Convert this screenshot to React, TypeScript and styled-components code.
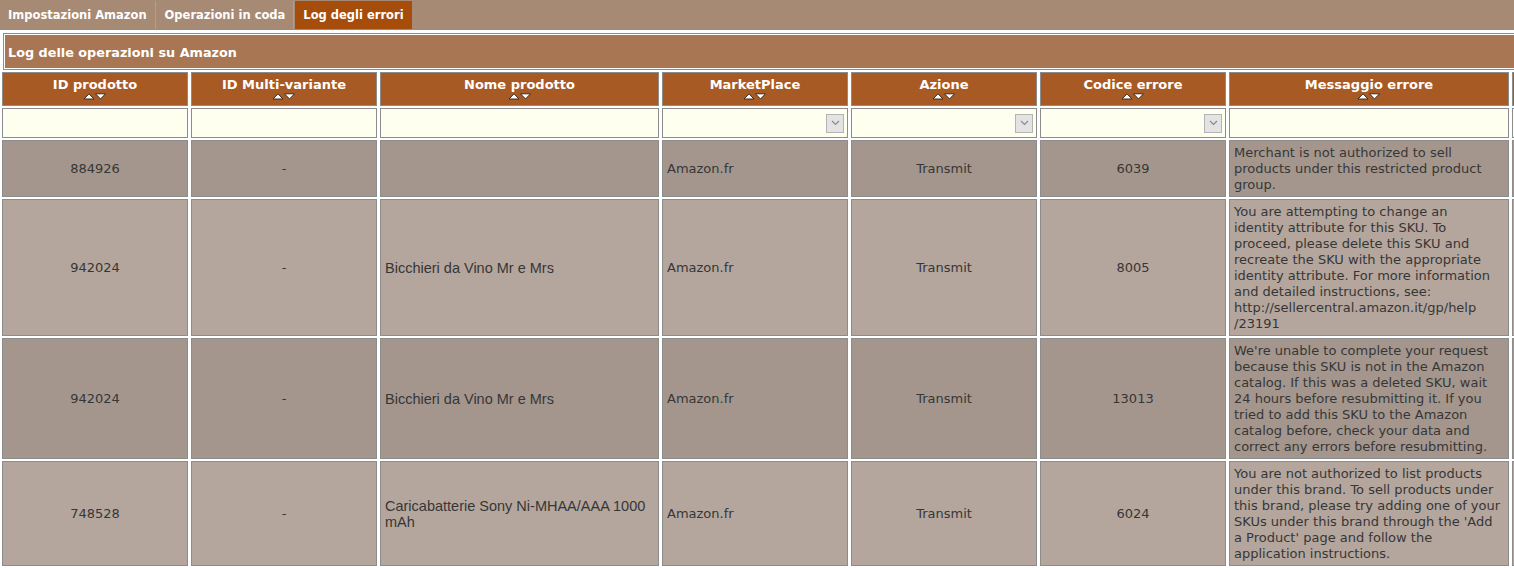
import styled, { createGlobalStyle } from "styled-components";

const GlobalStyle = createGlobalStyle`
  html, body {
    margin: 0;
    padding: 0;
    background: #ffffff;
    overflow: hidden;
  }
  body {
    font-family: "DejaVu Sans", Verdana, sans-serif;
  }
`;

const Page = styled.div`
  width: 1514px;
  height: 568px;
  overflow: hidden;
`;

const TabBar = styled.div`
  display: flex;
  align-items: stretch;
  height: 30px;
  padding-top: 1px;
  box-sizing: border-box;
  background: #a68a74;
`;

const Tab = styled.div<{ $active?: boolean }>`
  display: flex;
  align-items: center;
  height: 28px;
  padding: 0 8px 1px;
  box-sizing: border-box;
  font-size: 11.5px;
  font-weight: bold;
  color: #ffffff;
  background: ${(p) => (p.$active ? "#a64d0c" : "transparent")};
  border-right: ${(p) => (p.$active ? "none" : "1px solid #b79d8a")};
  margin-right: ${(p) => (p.$active ? "0" : "1px")};
`;

const TitleBar = styled.div`
  margin: 3px 0 0 3px;
  height: 37px;
  box-sizing: border-box;
  border: 1px solid #8c8c8c;
  border-right: none;
  box-shadow: inset 1px 1px 0 #ffffff, inset 0 -1px 0 #ffffff;
  background: #a87652;
  display: flex;
  align-items: center;
  padding: 1px 0 0 4px;
  font-size: 12.8px;
  font-weight: bold;
  color: #ffffff;
`;

const Grid = styled.table`
  border-collapse: separate;
  border-spacing: 3px 2px;
  table-layout: fixed;
  margin: 0 0 0 -1px;
  width: 1701px;
`;

const HeadCell = styled.th<{ $w: number }>`
  width: ${(p) => p.$w}px;
  box-sizing: border-box;
  background: #a85a25;
  border: 1px solid #8c8c8c;
  padding: 4px 2px 4px;
  color: #ffffff;
  font-size: 13px;
  font-weight: bold;
  text-align: center;
  vertical-align: top;
`;

const HeadLabel = styled.div`
  line-height: 15px;
  white-space: nowrap;
`;

const SortArrows = styled.div`
  display: flex;
  justify-content: center;
  height: 9px;
  padding-top: 1px;
  box-sizing: border-box;
`;

const FilterCell = styled.td`
  height: 30px;
  box-sizing: border-box;
  background: #fffff0;
  border: 1px solid #8c8c8c;
  padding: 0 3px 0 0;
`;

const SelectBox = styled.div`
  display: flex;
  justify-content: flex-end;
  align-items: center;
`;

const DropButton = styled.div`
  display: flex;
  align-items: center;
  justify-content: center;
  width: 18px;
  height: 19px;
  box-sizing: border-box;
  background: #e3e3e3;
  border: 1px solid #b4b4b4;
`;

const Cell = styled.td<{ $odd: boolean; $align: string; $product?: boolean }>`
  box-sizing: border-box;
  background: ${(p) => (p.$odd ? "#a4968d" : "#b4a69d")};
  border: 1px solid #8c8c8c;
  padding: 4px 4px 3px 4px;
  color: #363636;
  font-size: ${(p) => (p.$product ? "14.5px" : "13px")};
  line-height: 16px;
  text-align: ${(p) => p.$align};
  vertical-align: middle;
  white-space: pre-line;
  font-family: ${(p) =>
    p.$product ? '"Liberation Sans", Arial, sans-serif' : "inherit"};
`;

const Arrows = () => (
  <svg width="24" height="7" viewBox="0 0 24 7">
    <polygon points="1,6 6,0.8 11,6" fill="#ffffff" stroke="#3a2a20" strokeWidth="1" />
    <polygon points="12.5,0.8 22.5,0.8 17.5,6" fill="#ffffff" stroke="#3a2a20" strokeWidth="1" />
  </svg>
);

const Chevron = () => (
  <svg width="9" height="6" viewBox="0 0 9 6">
    <polyline points="1,1 4.5,4.5 8,1" fill="none" stroke="#8a8a8a" strokeWidth="1.2" />
  </svg>
);

type Column = { label: string; width: number; align: string; select?: boolean; product?: boolean };

const columns: Column[] = [
  { label: "ID prodotto", width: 186, align: "center" },
  { label: "ID Multi-variante", width: 186, align: "center" },
  { label: "Nome prodotto", width: 279, align: "left", product: true },
  { label: "MarketPlace", width: 186, align: "left", select: true },
  { label: "Azione", width: 186, align: "center", select: true },
  { label: "Codice errore", width: 186, align: "center", select: true },
  { label: "Messaggio errore", width: 280, align: "left" },
  { label: "", width: 186, align: "center" },
];

const rows: string[][] = [
  [
    "884926",
    "-",
    "",
    "Amazon.fr",
    "Transmit",
    "6039",
    "Merchant is not authorized to sell products under this restricted product group.",
    "",
  ],
  [
    "942024",
    "-",
    "Bicchieri da Vino Mr e Mrs",
    "Amazon.fr",
    "Transmit",
    "8005",
    "You are attempting to change an\nidentity attribute for this SKU. To proceed, please delete this SKU and recreate the SKU with the appropriate identity attribute. For more information and detailed instructions, see: http://sellercentral.amazon.it/gp/help\u200B/23191",
    "",
  ],
  [
    "942024",
    "-",
    "Bicchieri da Vino Mr e Mrs",
    "Amazon.fr",
    "Transmit",
    "13013",
    "We're unable to complete your request because this SKU is not in the Amazon catalog. If this was a deleted SKU, wait 24 hours before resubmitting it. If you tried to add this SKU to the Amazon catalog before, check your data and correct any errors before resubmitting.",
    "",
  ],
  [
    "748528",
    "-",
    "Caricabatterie Sony Ni-MHAA/AAA 1000 mAh",
    "Amazon.fr",
    "Transmit",
    "6024",
    "You are not authorized to list products under this brand. To sell products under this brand, please try adding one of your SKUs under this brand through the 'Add a Product' page and follow the application instructions.",
    "",
  ],
];

export default function App() {
  return (
    <Page>
      <GlobalStyle />
      <TabBar>
        <Tab>Impostazioni Amazon</Tab>
        <Tab>Operazioni in coda</Tab>
        <Tab $active>Log degli errori</Tab>
      </TabBar>
      <TitleBar>Log delle operazioni su Amazon</TitleBar>
      <Grid>
        <thead>
          <tr>
            {columns.map((c, i) => (
              <HeadCell key={i} $w={c.width}>
                <HeadLabel>{c.label}</HeadLabel>
                <SortArrows>
                  <Arrows />
                </SortArrows>
              </HeadCell>
            ))}
          </tr>
          <tr>
            {columns.map((c, i) => (
              <FilterCell key={i}>
                {c.select && (
                  <SelectBox>
                    <DropButton>
                      <Chevron />
                    </DropButton>
                  </SelectBox>
                )}
              </FilterCell>
            ))}
          </tr>
        </thead>
        <tbody>
          {rows.map((r, i) => (
            <tr key={i}>
              {r.map((v, j) => (
                <Cell
                  key={j}
                  $odd={i % 2 === 0}
                  $align={columns[j].align}
                  $product={columns[j].product}
                >
                  {v}
                </Cell>
              ))}
            </tr>
          ))}
        </tbody>
      </Grid>
    </Page>
  );
}
